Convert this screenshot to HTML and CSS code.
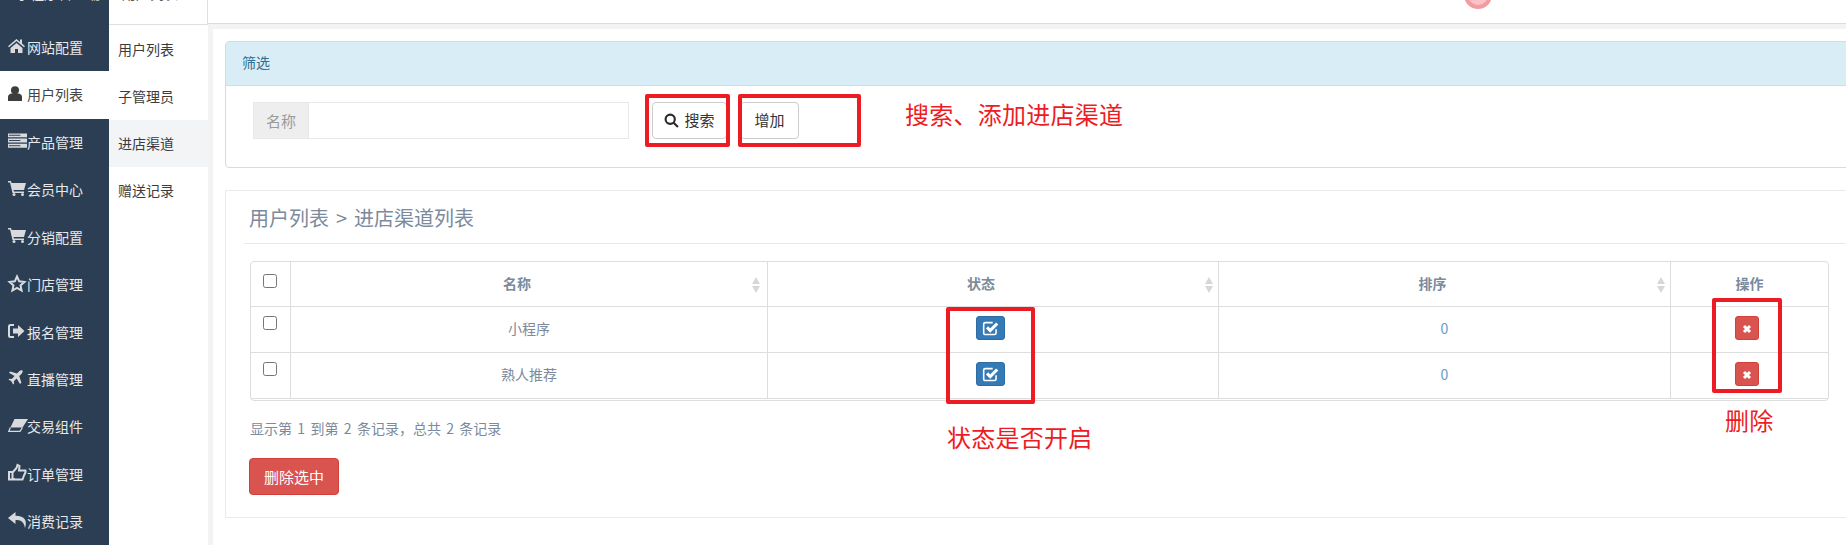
FILE: index.html
```html
<!DOCTYPE html>
<html lang="zh">
<head>
<meta charset="utf-8">
<title>进店渠道</title>
<link rel="stylesheet" href="styles.css">
</head>
<body>
<div class="app">
  <nav class="side">
    <div class="side-top"><span class="clip">小程序管理端</span></div>
    <a class="side-item"><span class="ic"><svg class="si i-home" viewBox="0 0 17 14"><path d="M8.500 0 0 7.200 1 8.200 8.500 2 16 8.200 17 7.200 14 4.600V.5H12V2.900ZM2.500 9V14H7V10H10V14H14.500V9L8.500 4Z"/></svg></span><span>网站配置</span></a>
    <a class="side-item active"><span class="ic"><svg class="si i-user" viewBox="0 0 15 16"><circle cx="7.500" cy="4.500" r="4.300"/><path d="M0 16V11.500C0 9.500 2 8 4 8H11C13 8 15 9.500 15 11.500V16Z"/></svg></span><span>用户列表</span></a>
    <a class="side-item"><span class="ic"><svg class="si i-server" viewBox="0 0 20 15"><path d="M0 0H20V4H0ZM0 5.500H20V9.500H0ZM0 11H20V15H0Z"/><path class="cut" d="M1 2H13M1 7.500H13M1 13H13"/></svg></span><span>产品管理</span></a>
    <a class="side-item"><span class="ic"><svg class="si i-cart" viewBox="0 0 18 15"><path d="M0 0H3L3.600 2H18L16 9H5.500L6 10.500H16V12H4.500L2 1.500H0Z"/><circle cx="6" cy="13.500" r="1.500"/><circle cx="14.500" cy="13.500" r="1.500"/></svg></span><span>会员中心</span></a>
    <a class="side-item"><span class="ic"><svg class="si i-cart" viewBox="0 0 18 15"><path d="M0 0H3L3.600 2H18L16 9H5.500L6 10.500H16V12H4.500L2 1.500H0Z"/><circle cx="6" cy="13.500" r="1.500"/><circle cx="14.500" cy="13.500" r="1.500"/></svg></span><span>分销配置</span></a>
    <a class="side-item"><span class="ic"><svg class="si i-star" viewBox="0 0 18 17"><path class="line" d="M9 1.500 11.200 6.300 16.400 6.900 12.500 10.400 13.600 15.500 9 12.900 4.400 15.500 5.500 10.400 1.600 6.900 6.800 6.300Z"/></svg></span><span>门店管理</span></a>
    <a class="side-item"><span class="ic"><svg class="si i-out" viewBox="0 0 17 14"><path d="M10 1 16.500 7 10 13V9.500H5V4.500H10Z"/><path class="line" d="M6 1H2.500Q1 1 1 2.500V11.500Q1 13 2.500 13H6"/></svg></span><span>报名管理</span></a>
    <a class="side-item"><span class="ic"><svg class="si i-plane" viewBox="0 0 16 16"><path d="M15.500 .5C14 0 12.500 .8 11.500 1.800L9.500 3.800 2.500 1.500 1 3 7 6.500 4 9.500 1.500 9.200 .5 10.200 3.500 12 5.500 15.500 6.500 14.500 6.200 12 9.200 9 12.800 15 14.300 13.500 12 6.500 14 4.500C15 3.500 16 2 15.500 .5Z"/></svg></span><span>直播管理</span></a>
    <a class="side-item"><span class="ic"><svg class="si i-eraser" viewBox="0 0 20 13"><path d="M6.500 0H20L14.500 8.500H2.400Z"/><path class="thin" d="M2.400 8.500 .8 12.300H12L14.500 8.500"/></svg></span><span>交易组件</span></a>
    <a class="side-item"><span class="ic"><svg class="si i-thumb" viewBox="0 0 19 17"><path class="line" d="M1 8H4.500V15.500H1ZM4.500 8.500 8.500 4 9.500 1 11.500 2 11 6.500H17.500Q18 8 16 11.500L14.500 15.500H7L4.500 14.500"/></svg></span><span>订单管理</span></a>
    <a class="side-item"><span class="ic"><svg class="si i-reply" viewBox="0 0 19 16"><path d="M7.500 0 0 6 7.500 12V8C12 8 15.500 8.500 17 16 19.500 9 17 3.800 7.500 3.800Z"/></svg></span><span>消费记录</span></a>
  </nav>
  <aside class="sub">
    <div class="sub-top"><span class="clip dark">用户列表</span></div>
    <div class="sub-list">
      <a class="sub-item">用户列表</a>
      <a class="sub-item">子管理员</a>
      <a class="sub-item on">进店渠道</a>
      <a class="sub-item">赠送记录</a>
    </div>
  </aside>
  <div class="main">
    <header class="topbar"><div class="avatar"></div></header>
    <div class="content">
      <section class="filter">
        <div class="filter-head">筛选</div>
        <div class="filter-body">
          <div class="group"><span class="addon">名称</span><span class="input"></span></div>
          <button class="btn search"><svg class="mag" viewBox="0 0 14 14"><circle cx="5.800" cy="5.800" r="4.300"/><path d="M9 9 13 13"/></svg>搜索</button>
          <button class="btn add">增加</button>
        </div>
      </section>
      <section class="card">
        <h2 class="title">用户列表 &gt; 进店渠道列表</h2>
        <div class="tbl-wrap">
          <table class="tbl">
            <colgroup><col class="c0"><col class="c1"><col class="c2"><col class="c3"><col class="c4"></colgroup>
            <thead>
              <tr>
                <th class="chk"><span class="box"></span></th>
                <th class="sort sort-first">名称</th>
                <th class="sort">状态</th>
                <th class="sort">排序</th>
                <th>操作</th>
              </tr>
            </thead>
            <tbody>
              <tr>
                <td class="chk"><span class="box"></span></td>
                <td>小程序</td>
                <td><span class="mini blue"><svg viewBox="0 0 16 14"><path class="cb" d="M12.500 8V11.500Q12.500 12.800 11.200 12.800H2.800Q1.500 12.800 1.500 11.500V3.500Q1.500 2.200 2.800 2.200H9.500"/><path class="ck" d="M4.500 6.500 7.300 9.300 13.500 3"/></svg></span></td>
                <td class="num">0</td>
                <td><span class="mini red"><svg viewBox="0 0 10 10"><path d="M2 2 8 8M8 2 2 8"/></svg></span></td>
              </tr>
              <tr>
                <td class="chk"><span class="box"></span></td>
                <td>熟人推荐</td>
                <td><span class="mini blue"><svg viewBox="0 0 16 14"><path class="cb" d="M12.500 8V11.500Q12.500 12.800 11.200 12.800H2.800Q1.500 12.800 1.500 11.500V3.500Q1.500 2.200 2.800 2.200H9.500"/><path class="ck" d="M4.500 6.500 7.300 9.300 13.500 3"/></svg></span></td>
                <td class="num">0</td>
                <td><span class="mini red"><svg viewBox="0 0 10 10"><path d="M2 2 8 8M8 2 2 8"/></svg></span></td>
              </tr>
            </tbody>
          </table>
        </div>
        <p class="info">显示第 1 到第 2 条记录，总共 2 条记录</p>
        <button class="btn-del">删除选中</button>
      </section>
    </div>
  </div>
</div>
<div class="mark m1"></div>
<div class="mark m2"></div>
<div class="mark m3"></div>
<div class="mark m4"></div>
<span class="note n1">搜索、添加进店渠道</span>
<span class="note n2">状态是否开启</span>
<span class="note n3">删除</span>
</body>
</html>
```

FILE: styles.css
```css
* { box-sizing: border-box; }
html, body { margin: 0; padding: 0; height: 545px; overflow: hidden; background: #fff; }
body { position: relative; font-family: "Microsoft YaHei", "Noto Sans CJK SC", sans-serif; font-size: 14px; color: #676a6c; }
.app { display: flex; width: 1846px; height: 545px; overflow: hidden; }

.side { width: 109px; flex: none; background: #2b3e53; color: #e6e8ea; overflow: hidden; }
.side-top { height: 24px; overflow: hidden; position: relative; }
.clip { position: absolute; left: 16px; top: -17px; font-size: 14px; white-space: nowrap; }
.clip.dark { left: 13px; color: #555; }
.side-item { display: flex; align-items: center; height: 47.4px; padding-left: 8px; padding-bottom: 1px; font-size: 14px; line-height: 16px; white-space: nowrap; }
.side-item.active { background: #fff; color: #444; padding-bottom: 2px; }
.ic { width: 19px; flex: none; display: flex; align-items: center; }
.si { flex: none; fill: #d8dadd; margin-top: -2px; overflow: visible; }
.i-home { width: 17px; height: 14px; }
.i-user { width: 14px; height: 15px; fill: #3d3d3d; }
.i-server { width: 19px; height: 15px; }
.i-cart { width: 18px; height: 15px; }
.i-star { width: 18px; height: 17px; }
.i-out { width: 17px; height: 14px; }
.i-plane { width: 15px; height: 15px; }
.i-eraser { width: 20px; height: 13px; }
.i-thumb { width: 19px; height: 17px; }
.i-reply { width: 19px; height: 16px; }
.si .cut { stroke: #2b3e53; stroke-width: 1; fill: none; }
.si .line { fill: none; stroke: #d8dadd; stroke-width: 2; }
.si .thin { fill: none; stroke: #d8dadd; stroke-width: 1.300; }

.sub { width: 99px; flex: none; background: #fff; }
.sub-top { height: 25px; position: relative; overflow: hidden; border-right: 1px solid #dfe0e6; border-bottom: 1px solid #dfe0e6; }
.sub-list { padding-top: 1px; }
.sub-item { display: flex; align-items: center; height: 47px; padding: 0 0 2px 9px; font-size: 14px; color: #3c3c3c; }
.sub-item.on { background: #f3f4f6; color: #3a3a44; }

.main { flex: 1; min-width: 0; background: #f3f3f3; display: flex; flex-direction: column; }
.topbar { height: 24px; background: #fff; border-bottom: 1px solid #dcdcdc; flex: none; position: relative; overflow: hidden; }
.avatar { position: absolute; left: 1256px; top: -19px; width: 28px; height: 28px; border-radius: 50%; border: 4px solid #f29ca2; background: #f8c4c7; }
.content { flex: 1; margin: 5px 0 0 5px; background: #fff; padding: 12px 0 0 12px; min-width: 0; }

.filter { width: 1640px; height: 127px; border: 1px solid #bfe4ef; border-radius: 4px; }
.filter-head { height: 44px; background: #d9edf7; border-bottom: 1px solid #bfe4ef; color: #31708f; font-size: 14px; line-height: 40px; padding-left: 16px; }
.filter-body { display: flex; align-items: flex-start; padding-top: 16px; padding-left: 27px; }
.group { display: flex; height: 37px; width: 376px; border: 1px solid #e8e8e8; }
.addon { width: 54px; background: #eee; color: #9a9a9a; font-size: 15px; display: flex; align-items: center; justify-content: center; }
.input { flex: 1; background: #fff; border-left: 1px solid #e8e8e8; }
.btn { height: 37px; border: 1px solid #ccc; border-radius: 4px; background: #fff; color: #333; font: inherit; font-size: 15px; padding: 0 0 2px; display: flex; align-items: center; justify-content: center; }
.search { width: 75px; margin-left: 23px; gap: 5px; }
.mag { width: 15px; height: 15px; fill: none; stroke: #2a2a2a; stroke-width: 2; margin-top: 2px; }
.add { width: 59px; margin-left: 13px; }

.card { width: 1640px; height: 328px; margin-top: 22px; border: 1px solid #e7eaec; padding: 0 0 0 18px; }
.title { margin: 0; width: 1620px; height: 53px; border-bottom: 1px solid #e7eaec; font-size: 20px; font-weight: 400; line-height: 29px; padding: 12px 0 0 5px; color: #7b8a9c; white-space: nowrap; word-spacing: 2.500px; }
.tbl-wrap { width: 1579px; margin-top: 17px; margin-left: 6px; border: 1px solid #ddd; padding-bottom: 1px; border-radius: 4px; overflow: hidden; }
.tbl { width: 1577px; table-layout: fixed; border-collapse: separate; border-spacing: 0; font-size: 14px; color: #7b8a9c; }
.c0 { width: 40px; } .c1 { width: 477px; } .c2 { width: 451px; } .c3 { width: 452px; } .c4 { width: 157px; }
.tbl th, .tbl td { height: 46px; border-right: 1px solid #ddd; border-bottom: 1px solid #ddd; text-align: center; padding: 0 0 3px; vertical-align: middle; }
.tbl th { font-weight: 700; font-size: 14px; height: 45px; padding-bottom: 2px; }
.tbl tr > *:last-child { border-right: 0; }
.sort { position: relative; padding-right: 24px !important; }
.sort::before, .sort::after { content: ""; position: absolute; right: 5px; width: 0; height: 0; border-left: 4.500px solid transparent; border-right: 4.500px solid transparent; }
.sort::before { top: 15px; border-bottom: 7px solid #d7d7d7; }
.sort::after { top: 24px; border-top: 7px solid #d7d7d7; }
.sort-first::before, .sort-first::after { right: 7px; }
.chk { vertical-align: top !important; }
.box { display: block; width: 14px; height: 14px; border: 1px solid #767676; border-radius: 2.500px; margin: 9px 0 0 12px; background: #fff; }
th .box { margin-top: 12px; }
.num { color: #6a9ac0; }
.mini { display: inline-flex; width: 29px; height: 24px; align-items: center; justify-content: center; border-radius: 3px; vertical-align: middle; margin: 0 5px 0 0; }
.mini.red { width: 24px; margin-right: 6px; }
.blue { background: #337ab7; border: 1px solid #2e6da4; }
.red { background: #d9534f; border: 1px solid #d43f3a; }
.blue svg { width: 18px; height: 16px; }
.red svg { width: 10px; height: 10px; margin-top: 1px; }
.cb { fill: none; stroke: #fff; stroke-width: 1.400; }
.ck { fill: none; stroke: #fff; stroke-width: 2.800; }
.red path { stroke: #fff; stroke-width: 3; fill: none; }
.info { margin: 18px 0 0 6px; font-size: 14px; line-height: 18px; color: #7b8a9c; word-spacing: 2.200px; }
.btn-del { display: block; width: 90px; height: 37px; margin: 21px 0 0 5px; padding: 0; background: #d9534f; border: 1px solid #d43f3a; border-radius: 4px; color: #fff; font: inherit; font-size: 15px; }

.mark { position: absolute; border: 4px solid #ed1c24; border-radius: 2px; }
.m1 { left: 645px; top: 94px; width: 85px; height: 53px; }
.m2 { left: 738px; top: 94px; width: 123px; height: 53px; }
.m3 { left: 946px; top: 307px; width: 89px; height: 97px; }
.m4 { left: 1712px; top: 298px; width: 70px; height: 95px; }
.note { position: absolute; color: #ed1c24; white-space: nowrap; line-height: 1.200; font-size: 24px; letter-spacing: .25px; }
.n1 { left: 905px; top: 100px; }
.n2 { left: 947px; top: 423px; }
.n3 { left: 1725px; top: 406px; }
```
